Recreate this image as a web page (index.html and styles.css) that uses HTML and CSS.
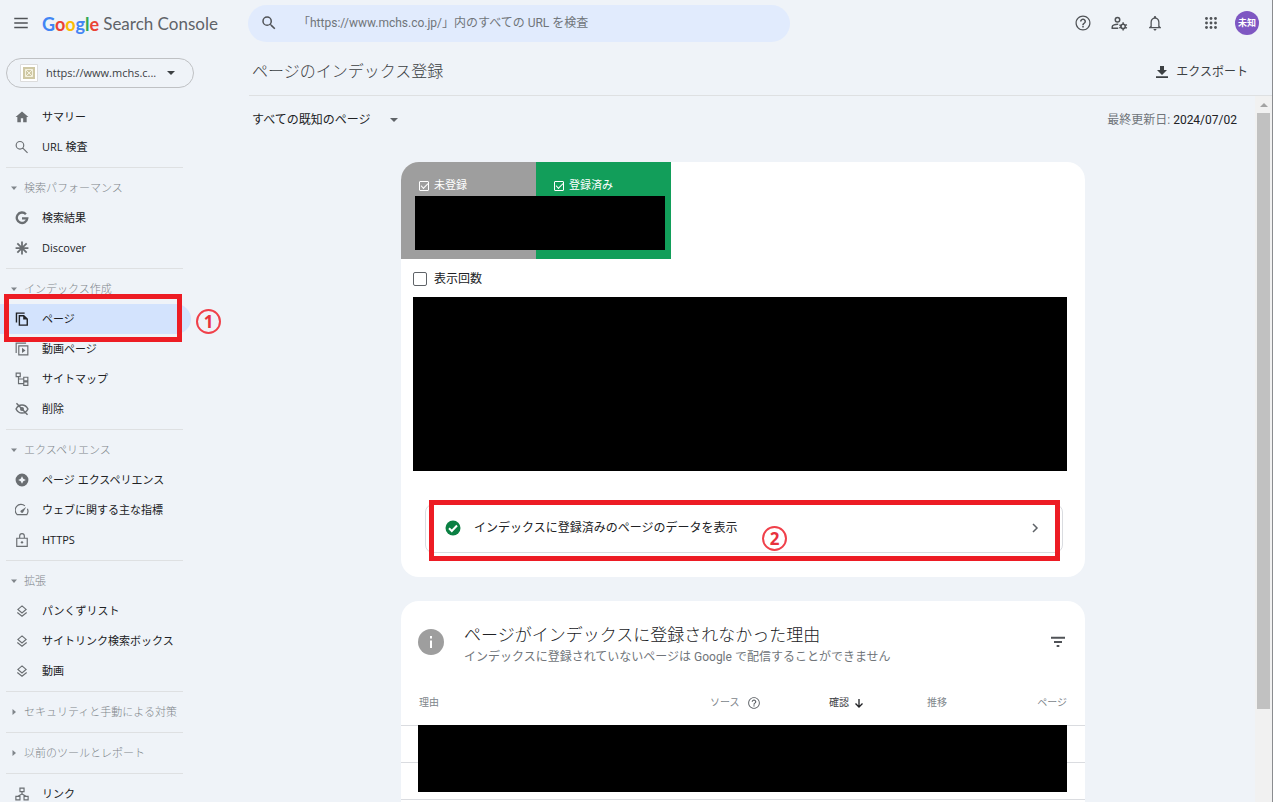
FILE: index.html
```html
<!DOCTYPE html>
<html lang="ja">
<head>
<meta charset="utf-8">
<title>Google Search Console</title>
<link rel="stylesheet" href="styles.css">
</head>
<body>
<svg class="defs" aria-hidden="true">
  <symbol id="help" viewBox="0 0 24 24"><path d="M11 18h2v-2h-2v2zm1-16C6.48 2 2 6.48 2 12s4.480 10 10 10 10-4.480 10-10S17.520 2 12 2zm0 18.400a8.400 8.400 0 1 1 0-16.800 8.400 8.400 0 0 1 0 16.800zM12 6c-2.210 0-4 1.790-4 4h2c0-1.100.9-2 2-2s2 .9 2 2c0 2-3 1.750-3 5h2c0-2.250 3-2.500 3-5 0-2.210-1.790-4-4-4z"/></symbol>
  <symbol id="search" viewBox="0 0 24 24"><path d="M15.500 14h-.79l-.28-.27A6.470 6.470 0 0 0 16 9.500 6.500 6.500 0 1 0 9.500 16c1.610 0 3.090-.59 4.230-1.570l.27.28v.79l5 4.990L20.490 19l-4.990-5zm-6 0a4.500 4.500 0 1 1 0-9 4.500 4.500 0 0 1 0 9z"/></symbol>
  <symbol id="layers" viewBox="0 0 24 24"><path fill="none" stroke="currentColor" stroke-width="2" d="M12 3.300 19 9.300 12 15.300 5 9.300zM4 14.500l8 6.500 8-6.500"/></symbol>
  <symbol id="down" viewBox="0 0 10 10"><path d="M0 2.500h10L5 7.500z"/></symbol>
  <symbol id="small-down" viewBox="0 0 8 8"><path d="M1 2.500h6L4 6z"/></symbol>
  <symbol id="small-right" viewBox="0 0 8 8"><path d="M2.500 1v6L6 4z"/></symbol>
</svg>

<header class="topbar">
  <div class="brand">
    <button class="icon-btn" aria-label="メニュー"><svg class="i18" viewBox="0 0 24 24"><path d="M3 5h18v2H3zm0 6h18v2H3zm0 6h18v2H3z"/></svg></button>
    <a class="logo" href="#"><span class="google"><span class="b">G</span><span class="r">o</span><span class="y">o</span><span class="b">g</span><span class="g">l</span><span class="r">e</span></span><span>Search Console</span></a>
  </div>
  <label class="search">
    <svg class="i18"><use href="#search"/></svg>
    <input type="text" aria-label="URL を検査" placeholder="「https://www.mchs.co.jp/」内のすべての URL を検査">
  </label>
  <div class="tools">
    <button class="icon-btn" aria-label="ヘルプ"><svg class="i18"><use href="#help"/></svg></button>
    <button class="icon-btn" aria-label="ユーザー設定"><svg class="i18" viewBox="0 0 24 24"><g fill="none" stroke="currentColor" stroke-width="2"><circle cx="10" cy="7.500" r="3"/><path d="M11 19H3v-2c0-2 4-3.500 8-3.300"/><circle cx="17.500" cy="16.500" r="2.800"/></g><path d="M16.500 11h2v3h-2zm0 8h2v3h-2zM12 15.200l1-1.700 2.600 1.500-1 1.700zm7.400 3.100 1-1.700 2.600 1.500-1 1.700zM12 17.800l2.600-1.500 1 1.700-2.600 1.500zm7.400-3.100 2.600-1.500 1 1.700-2.600 1.500z"/></svg></button>
    <button class="icon-btn" aria-label="通知"><svg class="i18" viewBox="0 0 24 24"><path d="M12 22c1.100 0 2-.9 2-2h-4c0 1.100.9 2 2 2zm6-6v-5c0-3.070-1.630-5.640-4.500-6.320V4a1.500 1.500 0 0 0-3 0v.68C7.640 5.360 6 7.920 6 11v5l-2 2v1h16v-1l-2-2zm-1.700 1.200H7.700V11c0-2.700 1.500-4.800 4.300-4.800s4.300 2.100 4.300 4.800v6.200z"/></svg></button>
    <button class="icon-btn apps" aria-label="アプリ"><svg class="i18" viewBox="0 0 24 24"><g><circle cx="6" cy="6" r="1.900"/><circle cx="12" cy="6" r="1.900"/><circle cx="18" cy="6" r="1.900"/><circle cx="6" cy="12" r="1.900"/><circle cx="12" cy="12" r="1.900"/><circle cx="18" cy="12" r="1.900"/><circle cx="6" cy="18" r="1.900"/><circle cx="12" cy="18" r="1.900"/><circle cx="18" cy="18" r="1.900"/></g></svg></button>
    <button class="avatar">未知</button>
  </div>
</header>

<div class="shell">
  <nav class="sidebar">
    <label class="property">
      <svg class="favicon" viewBox="0 0 18 18"><path fill="#fff" stroke="#dcdcdc" d="M.5.5h17v17H.5z"/><path fill="#cfc8a4" d="M3 3h12v12H3z"/><path fill="none" stroke="#f4f1df" d="M5.500 5.500h7v7h-7zm0 0 7 7m0-7-7 7"/></svg>
      <select aria-label="プロパティ"><option>https://www.mchs.c...</option></select>
      <svg class="i8"><use href="#down"/></svg>
    </label>

    <ul class="group">
      <li><a class="item" href="#"><svg class="i14" viewBox="0 0 24 24"><path d="M10 21v-7h4v7h6v-9h3L12 2.500 1 12h3v9z"/></svg>サマリー</a></li>
      <li><a class="item" href="#"><svg class="i14" viewBox="0 0 24 24"><path fill="none" stroke="currentColor" stroke-width="2" d="M15 9a6.500 6.500 0 1 1-13 0 6.500 6.500 0 0 1 13 0zm-2 4.500 8.500 8.500"/></svg>URL 検査</a></li>
    </ul>
    <ul class="group">
      <li><button class="section"><svg class="i8"><use href="#small-down"/></svg>検索パフォーマンス</button></li>
      <li><a class="item" href="#"><svg class="i14" viewBox="0 0 24 24"><path fill="none" stroke="currentColor" stroke-width="4" d="M18.700 5.500A9 9 0 1 0 21 12.500h-9"/></svg>検索結果</a></li>
      <li><a class="item" href="#"><svg class="i14" viewBox="0 0 24 24"><path stroke="currentColor" stroke-width="3" d="M12 1v22M1 12h22M4 4l16 16M20 4 4 20"/></svg>Discover</a></li>
    </ul>
    <ul class="group">
      <li><button class="section"><svg class="i8"><use href="#small-down"/></svg>インデックス作成</button></li>
      <li class="marked"><a class="item current" href="#"><svg class="i14" viewBox="0 0 24 24"><g fill="none" stroke="currentColor" stroke-width="2.400"><path d="M2.500 18V2h14"/><path d="M7.500 6.500H15l6 5.500v10.500H7.500z"/></g><path d="M14 6v7h7z"/></svg>ページ</a><span class="frame"></span><span class="step">1</span></li>
      <li><a class="item" href="#"><svg class="i14" viewBox="0 0 24 24"><g fill="none" stroke="currentColor" stroke-width="2"><path d="M2 19V2h17"/><path d="M6.500 6.500h15.500v15.500H6.500z"/></g><path d="m12 10 6 4.500-6 4.500z"/></svg>動画ページ</a></li>
      <li><a class="item" href="#"><svg class="i14" viewBox="0 0 24 24"><path fill="none" stroke="currentColor" stroke-width="2" d="M2 2h7v6H2zm4 6v12h9M6 12h9M15 9h7v6h-7zm0 8h7v6h-7z"/></svg>サイトマップ</a></li>
      <li><a class="item" href="#"><svg class="i14" viewBox="0 0 24 24"><path fill="none" stroke="currentColor" stroke-width="2.500" d="M1.800 12C4 7.500 8 5 12 5S20 7.500 22.200 12C20 16.500 16 19 12 19S4 16.500 1.800 12zM2.500 2l19 20"/><circle cx="12" cy="12" r="3.500"/></svg>削除</a></li>
    </ul>
    <ul class="group">
      <li><button class="section"><svg class="i8"><use href="#small-down"/></svg>エクスペリエンス</button></li>
      <li><a class="item" href="#"><svg class="i14" viewBox="0 0 24 24"><path fill-rule="evenodd" d="M12 1a11 11 0 1 0 0 22 11 11 0 0 0 0-22zm0 4.500 2.200 4.300 4.300 2.200-4.300 2.200-2.200 4.300-2.200-4.300L5.500 12l4.300-2.200z"/></svg>ページ エクスペリエンス</a></li>
      <li><a class="item" href="#"><svg class="i14" viewBox="0 0 24 24"><path fill="none" stroke="currentColor" stroke-width="2" d="M17 5A10 10 0 0 0 3.700 20h16.600a10 10 0 0 0 1-10"/><path d="m19 7-5 9a2.300 2.300 0 0 1-4-3z"/></svg>ウェブに関する主な指標</a></li>
      <li><a class="item" href="#"><svg class="i14" viewBox="0 0 24 24"><path fill="none" stroke="currentColor" stroke-width="2" d="M3 9h18v14H3zM8 9V5a4 4 0 0 1 8 0v4"/><circle cx="12" cy="16" r="2"/></svg>HTTPS</a></li>
    </ul>
    <ul class="group">
      <li><button class="section"><svg class="i8"><use href="#small-down"/></svg>拡張</button></li>
      <li><a class="item" href="#"><svg class="i14"><use href="#layers"/></svg>パンくずリスト</a></li>
      <li><a class="item" href="#"><svg class="i14"><use href="#layers"/></svg>サイトリンク検索ボックス</a></li>
      <li><a class="item" href="#"><svg class="i14"><use href="#layers"/></svg>動画</a></li>
    </ul>
    <ul class="group"><li><button class="section"><svg class="i8"><use href="#small-right"/></svg>セキュリティと手動による対策</button></li></ul>
    <ul class="group"><li><button class="section"><svg class="i8"><use href="#small-right"/></svg>以前のツールとレポート</button></li></ul>
    <ul class="group">
      <li><a class="item" href="#"><svg class="i14" viewBox="0 0 24 24"><path fill="none" stroke="currentColor" stroke-width="2" d="M8.500 2h7v6h-7zM1.500 16h7v6h-7zm14 0h7v6h-7zM12 8v4l-7 4m7-4 7 4"/></svg>リンク</a></li>
    </ul>
  </nav>

  <main class="main">
    <div class="titlebar">
      <h1>ページのインデックス登録</h1>
      <button class="export"><svg class="i16" viewBox="0 0 24 24"><path d="M9 3h6v6h4.500L12 16.500 4.500 9H9zM3 18.500h18V21H3z"/></svg>エクスポート</button>
    </div>
    <div class="viewport">
      <div class="content">
        <div class="filters">
          <label class="scope"><select aria-label="対象ページ"><option>すべての既知のページ</option></select><svg class="i8"><use href="#down"/></svg></label>
          <p class="updated">最終更新日: <time>2024/07/02</time></p>
        </div>

        <section class="card">
          <div class="tiles">
            <label class="tile grey"><input type="checkbox" checked>未登録</label>
            <label class="tile green"><input type="checkbox" checked>登録済み</label>
            <div class="mask tile-mask"></div>
          </div>
          <label class="impressions"><input type="checkbox">表示回数</label>
          <div class="mask chart"></div>
          <div class="marked indexed">
            <a class="indexed-link" href="#">
              <svg class="i16" viewBox="0 0 16 16"><circle cx="8" cy="8" r="7.500" fill="#0b8043"/><path fill="none" stroke="#fff" stroke-width="2" d="m4 8.200 2.800 2.800 5.200-5.500"/></svg>
              <span>インデックスに登録済みのページのデータを表示</span>
              <svg class="i10 chevron" viewBox="0 0 10 10"><path fill="none" stroke="currentColor" stroke-width="1.500" d="m3 1 4 4-4 4"/></svg>
            </a>
            <span class="frame"></span><span class="step">2</span>
          </div>
        </section>

        <section class="card">
          <div class="reasons-head">
            <svg class="i26" viewBox="0 0 26 26"><circle cx="13" cy="13" r="13" fill="#9e9e9e"/><path fill="#fff" d="M12 7h2v2.500h-2zm0 4.500h2V19h-2z"/></svg>
            <div class="reasons-title">
              <h2>ページがインデックスに登録されなかった理由</h2>
              <p>インデックスに登録されていないページは Google で配信することができません</p>
            </div>
            <button class="icon-btn" aria-label="フィルタ"><svg class="i16" viewBox="0 0 24 24"><path d="M1.500 4h21v3h-21zM6 10.500h12v3H6zm4 6h4v3h-4z"/></svg></button>
          </div>
          <div class="table-wrap">
            <table>
              <thead><tr>
                <th class="reason">理由</th>
                <th class="source"><span class="cell">ソース<svg class="i14"><use href="#help"/></svg></span></th>
                <th class="check"><span class="cell">確認<svg class="i10" viewBox="0 0 10 10"><path fill="none" stroke="currentColor" stroke-width="1.300" d="M5 1v8M1.500 5.500 5 9l3.500-3.500"/></svg></span></th>
                <th class="trend">推移</th>
                <th class="pages">ページ</th>
              </tr></thead>
              <tbody><tr><td colspan="5"></td></tr><tr><td colspan="5"></td></tr><tr><td colspan="5"></td></tr></tbody>
            </table>
            <div class="mask table-mask"></div>
          </div>
        </section>
      </div>
      <div class="scrollbar"><svg class="i8"><path d="M0 6h8L4 2z"/></svg><div class="thumb"></div></div>
    </div>
  </main>
</div>
</body>
</html>
```
FILE: styles.css
```css
* { box-sizing: border-box; }
body {
  margin: 0;
  height: 100vh;
  overflow: hidden;
  display: flex;
  flex-direction: column;
  background: #eff3f8;
  border-right: 1px solid #8a8c8f;
  color: #202124;
  font: 12px/18px Roboto, "Noto Sans CJK JP", sans-serif;
}
h1, h2, p, ul { margin: 0; padding: 0; font-weight: 300; }
ul { list-style: none; }
a { color: inherit; text-decoration: none; }
button, input, select { font: inherit; color: inherit; background: none; border: 0; padding: 0; margin: 0; }
svg { fill: currentColor; flex: none; display: block; }
.defs { position: absolute; width: 0; height: 0; }
.i8 { width: 8px; height: 8px; }
.i10 { width: 10px; height: 10px; }
.i14 { width: 14px; height: 14px; }
.i16 { width: 16px; height: 16px; }
.i18 { width: 18px; height: 18px; }
.i26 { width: 26px; height: 26px; }
.icon-btn { width: 36px; height: 36px; display: grid; place-items: center; color: #505357; }

.topbar { display: flex; align-items: center; height: 46px; flex: none; padding-right: 13px; }
.brand { display: flex; align-items: center; width: 248px; padding-left: 3px; flex: none; }
.logo { display: flex; gap: 4px; align-items: center; padding: 2px 0 0 3px; font-family: Lato, sans-serif; font-size: 17px; line-height: 24px; color: #5f6368; white-space: nowrap; }
.google { font-size: 18px; font-weight: 700; }
.b { color: #4285f4; } .r { color: #ea4335; } .y { color: #fbbc04; } .g { color: #34a853; }
.search { display: flex; align-items: center; gap: 20px; flex: 0 1 542px; height: 37px; padding: 0 12px; border-radius: 19px; background: #e1ebfd; color: #505357; }
.search input { flex: 1; min-width: 0; outline: 0; }
.search input::placeholder { color: #70757a; opacity: 1; }
.tools { display: flex; align-items: center; margin-left: auto; }
.apps { margin-left: 20px; }
.avatar { width: 24px; height: 24px; margin-left: 6px; border-radius: 50%; background: #7e57c2; color: #fff; font-size: 9px; font-weight: 700; }

.shell { display: flex; flex: 1; min-height: 0; }
.sidebar { width: 231px; flex: none; padding-top: 12px; font-family: "Open Sans", "Noto Sans CJK JP", sans-serif; font-size: 11px; }
.property { display: flex; align-items: center; width: 188px; height: 30px; margin: 0 0 14px 6px; padding: 0 18px 0 13px; border: 1px solid #bfc1c4; border-radius: 15px; color: #3c4043; }
.favicon { width: 18px; height: 18px; margin-right: 8px; }
.property select { flex: 1; min-width: 0; }
select { appearance: none; outline: 0; }
.group + .group::before { content: ""; display: block; width: 177px; height: 1px; margin: 5px 0 5px 6px; background: #dee0e2; }
.item { display: flex; align-items: center; gap: 13px; width: 191px; height: 30px; padding-left: 15px; white-space: nowrap; font-weight: 400; }
.item svg { color: #6a6e72; }
.item.current { background: #d3e3fd; border-radius: 0 15px 15px 0; }
.current svg { color: #202124; }
.section { display: flex; align-items: center; gap: 6px; height: 30px; padding-left: 10px; color: #80868b; white-space: nowrap; }

.marked { position: relative; }
.frame { position: absolute; left: 4px; top: -10px; width: 178px; height: 48px; border: 5px solid #ed1c24; pointer-events: none; }
.step { position: absolute; left: 196px; top: 5px; width: 25px; height: 25px; border: 2px solid #f0404a; border-radius: 50%; color: #e8323c; font: 700 17px/21px "Noto Sans", sans-serif; text-align: center; }

.main { flex: 1; min-width: 0; display: flex; flex-direction: column; }
.titlebar { display: flex; align-items: center; justify-content: space-between; height: 50px; flex: none; margin-left: 18px; padding: 2px 24px 0 3px; border-bottom: 1px solid #dee0e2; color: #3c4043; }
h1 { font-size: 16px; line-height: 24px; }
.export { display: flex; align-items: center; gap: 6px; }
.viewport { display: flex; flex: 1; min-height: 0; }
.content { flex: 1; min-width: 0; overflow: hidden; }
.filters { display: flex; align-items: center; justify-content: space-between; height: 48px; margin-bottom: 18px; padding: 0 18px 0 21px; }
.scope { display: flex; align-items: center; gap: 17px; }
.scope svg { color: #5f6368; }
.updated { color: #70757a; font-weight: 400; }
.updated time { color: #202124; }
.scrollbar { width: 17px; flex: none; display: flex; flex-direction: column; align-items: center; gap: 4px; padding-top: 5px; background: #f1f1f1; color: #a3a3a3; }
.thumb { width: 13px; height: 85%; background: #c1c1c1; }

.card { max-width: 684px; margin: 0 auto 24px; border-radius: 18px; background: #fff; overflow: hidden; }
.mask { background: #000; }
.tiles { position: relative; display: flex; width: 270px; }
.tile { display: flex; align-items: flex-start; gap: 5px; flex: 1; height: 97px; padding: 15px 18px; color: #fff; font-size: 11px; }
.grey { background: #9e9e9e; }
.green { background: #129e5a; }
.tile input { appearance: none; width: 10px; height: 10px; margin-top: 4px; border: 1px solid #fff; border-radius: 1px; display: grid; place-items: center; }
.tile input:checked::before { content: ""; width: 6px; height: 3px; border: solid #fff; border-width: 0 0 1px 1px; transform: translateY(-1px) rotate(-45deg); }
.tile-mask { position: absolute; inset: 34px 6px 9px 14px; }
.impressions { display: flex; align-items: center; gap: 7px; height: 38px; padding: 2px 12px 0; }
.impressions input { appearance: none; width: 14px; height: 14px; border: 1px solid #5f6368; border-radius: 2px; }
.chart { height: 174px; margin: 0 18px 0 12px; }
.indexed { margin: 33px 22px 24px 24px; }
.indexed-link { display: flex; align-items: center; gap: 13px; height: 49px; padding: 0 22px 2px 19px; border: 1px solid #dadce0; border-radius: 8px; }
.chevron { margin-left: auto; color: #5f6368; }
.indexed .frame { top: -4px; right: 3px; width: auto; height: 61px; }
.indexed .step { left: 337px; top: 22px; }

.reasons-head { display: flex; align-items: center; gap: 20px; padding: 17px 9px 0 17px; }
.reasons-title { flex: 1; padding-top: 4px; }
h2 { font-size: 17px; line-height: 26px; }
.reasons-title p { color: #70757a; font-weight: 400; }
.table-wrap { position: relative; margin-top: 15px; }
table { width: 100%; border-collapse: collapse; table-layout: fixed; }
th { height: 44px; padding: 0; font-size: 10px; font-weight: 400; text-align: left; color: #80868b; border-bottom: 1px solid #dadce0; }
td { height: 37px; padding: 0; border-bottom: 1px solid #dadce0; }
.cell { display: flex; align-items: center; gap: 7px; }
.cell svg { color: #5f6368; }
th.reason { width: 309px; padding-left: 18px; }
.source { width: 119px; }
.check { width: 98px; color: #3c4043; }
.check svg { color: #202124; }
.check .cell { gap: 5px; }
.trend { width: 60px; }
th.pages { padding-right: 18px; text-align: right; }
.table-mask { position: absolute; left: 17px; right: 18px; top: 44px; height: 67px; }
```
